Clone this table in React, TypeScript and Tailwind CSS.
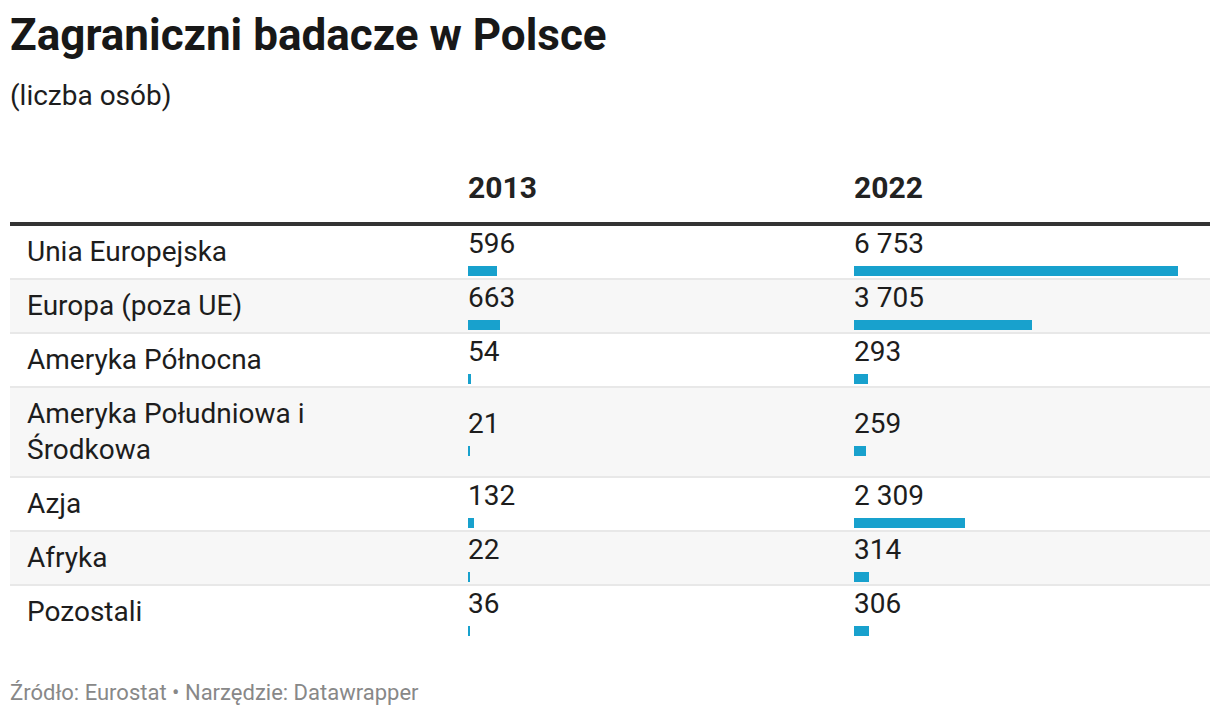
const ROWS = [
  { label: "Unia Europejska", a: 596, b: 6753 },
  { label: "Europa (poza UE)", a: 663, b: 3705 },
  { label: "Ameryka Północna", a: 54, b: 293 },
  { label: "Ameryka Południowa i Środkowa", a: 21, b: 259 },
  { label: "Azja", a: 132, b: 2309 },
  { label: "Afryka", a: 22, b: 314 },
  { label: "Pozostali", a: 36, b: 306 }
];

const MAX = 6753;
const BAR_MAX = 324;

function fmt(n: number) {
  return n.toString().replace(/\B(?=(\d{3})+(?!\d))/g, " ");
}

function ValueCell({ value }: { value: number }) {
  const w = Math.max(2, Math.round((value / MAX) * BAR_MAX));
  return (
    <div className="flex flex-col pt-[2px]">
      <span className="text-[28px] leading-[28px] text-[#1d1d1d]">{fmt(value)}</span>
      <div className="mt-[8px] h-[10px] bg-[#18a1cd]" style={{ width: w }} />
    </div>
  );
}

export default function App() {
  return (
    <div className="min-h-[716px] w-[1220px] bg-white px-[10px] font-['Roboto',sans-serif] text-[#1d1d1d]">
      <h1 className="pt-[13px] text-[44px] font-bold leading-[44px] text-[#181818]">Zagraniczni badacze w Polsce</h1>
      <p className="mt-[23px] text-[28px] leading-[32px] text-[#1d1d1d]">(liczba osób)</p>

      <div className="mt-[58px] w-[1200px]">
        <div className="grid grid-cols-[458px_386px_356px] border-b-4 border-[#333333] pb-[16px]">
          <div />
          <div className="text-[30px] font-bold leading-[36px] text-[#222222]">2013</div>
          <div className="text-[30px] font-bold leading-[36px] text-[#222222]">2022</div>
        </div>
        {ROWS.map((r, i) => (
          <div
            key={r.label}
            className={
              "grid grid-cols-[458px_386px_356px] items-center " +
              (i % 2 === 1 ? "bg-[#f7f7f7] " : "bg-white ") +
              (i < ROWS.length - 1 ? "border-b-2 border-[#e8e8e8]" : "")
            }
          >
            <div className="max-w-[310px] py-2 pl-[17px] text-[28px] leading-[36px]">{r.label}</div>
            <ValueCell value={r.a} />
            <ValueCell value={r.b} />
          </div>
        ))}
      </div>

      <p className="mt-[43px] text-[22px] leading-[24px] text-[#888888]">Źródło: Eurostat • Narzędzie: Datawrapper</p>
    </div>
  );
}
